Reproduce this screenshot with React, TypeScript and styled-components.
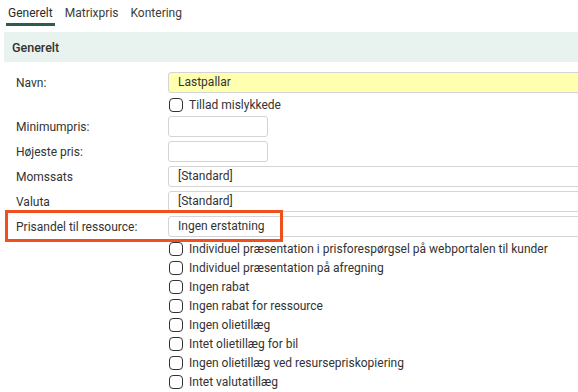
import styled, { createGlobalStyle } from "styled-components";

const GlobalStyle = createGlobalStyle`
  html, body {
    margin: 0;
    padding: 0;
    background: #ffffff;
    overflow: hidden;
  }
  body {
    font-family: Roboto, "Liberation Sans", Arial, sans-serif;
    font-size: 12px;
    color: #333333;
  }
`;

const Page = styled.div`
  width: 578px;
  height: 392px;
  overflow: hidden;
`;

const TabBar = styled.div`
  display: flex;
  gap: 8px;
  padding-left: 6px;
  margin-bottom: 6px;
`;

const Tab = styled.div<{ $active?: boolean }>`
  padding: 4px 2px 1px;
  line-height: 18px;
  font-size: 12px;
  color: ${(p) => (p.$active ? "#2a2a2a" : "#3c3c3c")};
  border-bottom: 3px solid ${(p) => (p.$active ? "#2c5e4b" : "transparent")};
`;

const SectionHeader = styled.div`
  margin-left: 4px;
  height: 30px;
  display: flex;
  align-items: center;
  padding-left: 8px;
  background: #e8f2ee;
  font-size: 12.5px;
  font-weight: 500;
  color: #333333;
`;

const Form = styled.div`
  padding: 8px 0 0 16px;
  display: flex;
  flex-direction: column;
`;

const Row = styled.div<{ $highlight?: boolean }>`
  position: relative;
  display: grid;
  grid-template-columns: 152px 1fr;
  align-items: center;
  height: 25px;

  ${(p) =>
    p.$highlight &&
    `
    &::after {
      content: "";
      position: absolute;
      left: -11px;
      top: -4px;
      width: 272px;
      height: 26px;
      border: 3px solid #f0501c;
      pointer-events: none;
    }
  `}
`;

const CheckRow = styled.div`
  display: grid;
  grid-template-columns: 152px 1fr;
  align-items: center;
  height: 19px;
`;

const Label = styled.div`
  font-size: 12px;
  color: #333333;
  white-space: nowrap;
`;

const Input = styled.div<{ $wide?: boolean; $required?: boolean }>`
  box-sizing: border-box;
  height: 21px;
  width: ${(p) => (p.$wide ? "440px" : "100px")};
  border: 1px solid #d4d4d4;
  border-radius: 3px;
  background: ${(p) => (p.$required ? "#ffffb0" : "#ffffff")};
  padding-left: 9px;
  line-height: 19px;
  font-size: 12px;
  color: #333333;
  white-space: nowrap;
`;

const CheckLabel = styled.label`
  display: flex;
  align-items: center;
  gap: 6px;
  font-size: 12px;
  color: #333333;
  white-space: nowrap;
`;

const Box = styled.span`
  box-sizing: border-box;
  width: 14px;
  height: 14px;
  margin-left: 1px;
  border: 1px solid #333333;
  border-radius: 4px;
  background: #ffffff;
  flex-shrink: 0;
`;

const fields = [
  { label: "Minimumpris:", value: "", wide: false },
  { label: "Højeste pris:", value: "", wide: false },
  { label: "Momssats", value: "[Standard]", wide: true },
  { label: "Valuta", value: "[Standard]", wide: true },
];

const options = [
  "Individuel præsentation i prisforespørgsel på webportalen til kunder",
  "Individuel præsentation på afregning",
  "Ingen rabat",
  "Ingen rabat for ressource",
  "Ingen olietillæg",
  "Intet olietillæg for bil",
  "Ingen olietillæg ved resursepriskopiering",
  "Intet valutatillæg",
];

const Check = ({ text }: { text: string }) => (
  <CheckLabel>
    <Box />
    {text}
  </CheckLabel>
);

const App = () => {
  return (
    <Page>
      <GlobalStyle />
      <TabBar>
        <Tab $active>Generelt</Tab>
        <Tab>Matrixpris</Tab>
        <Tab>Kontering</Tab>
      </TabBar>
      <SectionHeader>Generelt</SectionHeader>
      <Form>
        <Row>
          <Label>Navn:</Label>
          <Input $wide $required>
            Lastpallar
          </Input>
        </Row>
        <CheckRow>
          <span />
          <Check text="Tillad mislykkede" />
        </CheckRow>
        {fields.map((f) => (
          <Row key={f.label}>
            <Label>{f.label}</Label>
            <Input $wide={f.wide}>{f.value}</Input>
          </Row>
        ))}
        <Row $highlight>
          <Label>Prisandel til ressource:</Label>
          <Input $wide>Ingen erstatning</Input>
        </Row>
        {options.map((o) => (
          <CheckRow key={o}>
            <span />
            <Check text={o} />
          </CheckRow>
        ))}
      </Form>
    </Page>
  );
};

export default App;
